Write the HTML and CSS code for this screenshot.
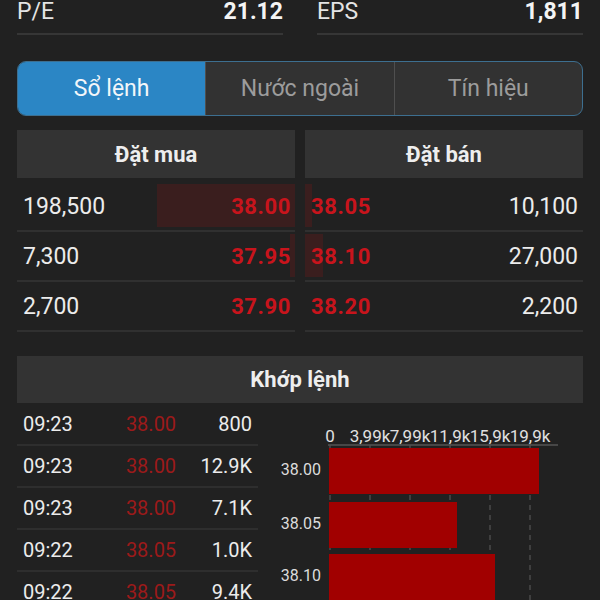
FILE: index.html
```html
<!DOCTYPE html>
<html lang="vi">
<head>
    <meta charset="UTF-8">
    <title>Sổ lệnh</title>
    <link rel="stylesheet" href="styles.css">
</head>
<body>
<div class="page">
    <div class="stats">
        <div class="stat"><span class="stat-name">P/E</span><span class="stat-val">21.12</span></div>
        <div class="stat"><span class="stat-name">EPS</span><span class="stat-val">1,811</span></div>
    </div>

    <div class="tabs">
        <div class="tab active">Sổ lệnh</div>
        <div class="tab">Nước ngoài</div>
        <div class="tab">Tín hiệu</div>
    </div>

    <div class="book">
        <div class="side buy">
            <div class="head">Đặt mua</div>
            <div class="row"><span class="qty">198,500</span><span class="price"><i class="bar" style="width:138px"></i>38.00</span></div>
            <div class="row"><span class="qty">7,300</span><span class="price"><i class="bar" style="width:5px"></i>37.95</span></div>
            <div class="row"><span class="qty">2,700</span><span class="price">37.90</span></div>
        </div>
        <div class="side sell">
            <div class="head">Đặt bán</div>
            <div class="row"><span class="price"><i class="bar" style="width:7px"></i>38.05</span><span class="qty">10,100</span></div>
            <div class="row"><span class="price"><i class="bar" style="width:18px"></i>38.10</span><span class="qty">27,000</span></div>
            <div class="row"><span class="price">38.20</span><span class="qty">2,200</span></div>
        </div>
    </div>

    <div class="head match-head">Khớp lệnh</div>
    <div class="match">
        <div class="trades">
            <div class="trade"><span class="t">09:23</span><span class="p">38.00</span><span class="v">800</span></div>
            <div class="trade"><span class="t">09:23</span><span class="p">38.00</span><span class="v">12.9K</span></div>
            <div class="trade"><span class="t">09:23</span><span class="p">38.00</span><span class="v">7.1K</span></div>
            <div class="trade"><span class="t">09:22</span><span class="p">38.05</span><span class="v">1.0K</span></div>
            <div class="trade"><span class="t">09:22</span><span class="p">38.05</span><span class="v">9.4K</span></div>
        </div>
        <svg class="chart" width="325" height="196" viewBox="0 0 325 196">
            <g class="grid">
                <line x1="72" y1="41" x2="72" y2="196"/>
                <line x1="112" y1="41" x2="112" y2="196"/>
                <line x1="152" y1="41" x2="152" y2="196"/>
                <line x1="192" y1="41" x2="192" y2="196"/>
                <line x1="232" y1="41" x2="232" y2="196"/>
                <line x1="272" y1="41" x2="272" y2="196"/>
            </g>
            <line class="axis" x1="70" y1="41" x2="300" y2="41"/>
            <g class="xlab">
                <text x="72" y="38">0</text>
                <text x="112" y="38">3,99k</text>
                <text x="152" y="38">7,99k</text>
                <text x="192" y="38">11,9k</text>
                <text x="232" y="38">15,9k</text>
                <text x="272" y="38">19,9k</text>
            </g>
            <rect class="hbar" x="71" y="44" width="210" height="46"/>
            <rect class="hbar" x="71" y="98" width="128" height="46"/>
            <rect class="hbar" x="71" y="150" width="166" height="46"/>
            <g class="ylab">
                <text x="63" y="67">38.00</text>
                <text x="63" y="121">38.05</text>
                <text x="63" y="173">38.10</text>
            </g>
        </svg>
    </div>
</div>
</body>
</html>
```

FILE: styles.css
```css
body { margin:0; background:#212121; font-family:Roboto, "Noto Sans", sans-serif; color:#ececec; overflow:hidden;}
.page { padding:0 17px; width:566px; height:600px;}

.stats { display:flex; gap:34px;}
.stat { flex:1; display:flex; justify-content:space-between; align-items:center; height:24px; padding-bottom:9px; border-bottom:2px solid #363636; font-size:23px; line-height:24px;}
.stat-name { color:#e4e4e4;}
.stat-val { font-weight:bold; color:#f4f4f4;}

.tabs { display:flex; margin-top:26px; height:53px; border:1px solid #3d6f90; border-radius:9px; overflow:hidden; background:#323232;}
.tab { flex:1; display:flex; align-items:center; justify-content:center; font-size:23px; color:#9c9c9c; border-left:1px solid #4f4f4f;}
.tab:first-child { border-left:none;}
.tab.active { background:#2b86c5; color:#f2f6fa;}

.book { display:flex; gap:10px; margin-top:14px;}
.side { flex:1;}
.head { height:48px; background:#333333; display:flex; align-items:center; justify-content:center; font-size:22px; font-weight:bold; color:#eeeeee;}
.row { display:flex; justify-content:space-between; align-items:center; height:48px; border-bottom:2px solid #303030; font-size:23px;}
.head + .row { margin-top:4px;}
.buy .qty { padding-left:6px;}
.sell .qty { padding-right:5px;}
.price { position:relative; z-index:0; align-self:stretch; display:flex; align-items:center; color:#c8141c; font-weight:bold; font-size:22px; letter-spacing:0.6px;}
.buy .price { padding-right:4px; justify-content:flex-end;}
.sell .price { padding-left:6px;}
.bar { position:absolute; top:2px; bottom:3px; background:#3a1e1e; z-index:-1;}
.buy .bar { right:0;}
.sell .bar { left:0;}

.match-head { margin-top:24px; height:47px;}
.match { display:flex; margin-top:1px;}
.trades { width:241px;}
.trade { display:flex; align-items:center; height:40px; border-bottom:2px solid #2e2e2e; font-size:20px; color:#ececec;}
.trade .t { width:101px; padding-left:6px;}
.trade .p { width:54px; color:#9c1a1a; text-align:center;}
.trade .v { flex:1; text-align:right; padding-right:6px;}

.chart { display:block; font-family:Roboto, sans-serif;}
.grid line { stroke:#4a4a4a; stroke-width:1.5; stroke-dasharray:5 5;}
.axis { stroke:#555555; stroke-width:1.5;}
.xlab text { font-size:17px; fill:#e0e0e0; text-anchor:middle;}
.ylab text { font-size:16px; fill:#dcdcdc; text-anchor:end; dominant-baseline:middle;}
.hbar { fill:#a10000;}
```
